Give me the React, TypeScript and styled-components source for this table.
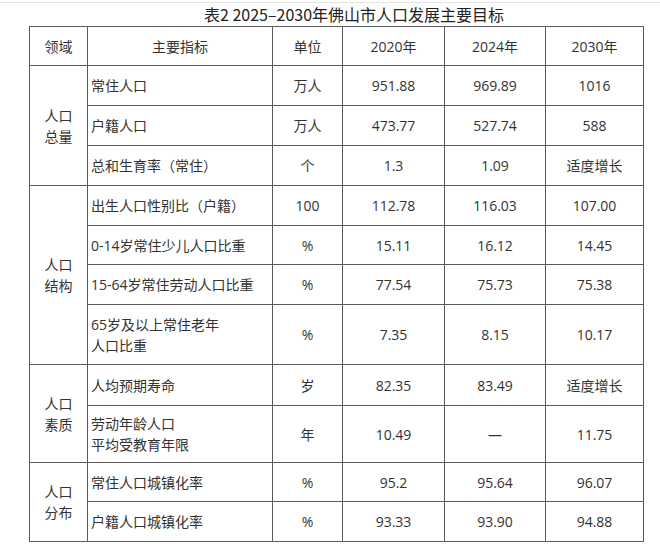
import React from 'react'
import styled, { createGlobalStyle } from 'styled-components'

const GlobalStyle = createGlobalStyle`
    html, body {
        margin: 0;
        padding: 0;
        background: #ffffff;
    }
    body {
        font-family: "Open Sans", "Noto Sans CJK SC", sans-serif;
        color: #333333;
    }
`

const Page = styled.div`
    width: 660px;
    height: 552px;
    overflow: hidden;
    border-top: 1px solid #e4e4e4;
    margin-top: 2px;
    box-sizing: border-box;
`

const Title = styled.div`
    height: 23px;
    padding-left: 204px;
    font-family: "Noto Sans CJK SC", sans-serif;
    font-size: 16px;
    line-height: 23px;
    color: #222222;
    white-space: nowrap;
`

const Table = styled.table`
    margin-left: 29px;
    width: 614px;
    table-layout: fixed;
    border-collapse: collapse;
    font-size: 14px;
`

const Row = styled.tr<{ $h: number }>`
    height: ${p => p.$h}px;
`

const Cell = styled.td<{ $left?: boolean }>`
    border: 1px solid #5a5a5a;
    padding: 0;
    padding-left: ${p => (p.$left ? '3px' : '0')};
    text-align: ${p => (p.$left ? 'left' : 'center')};
    vertical-align: middle;
    line-height: 21px;
    color: #333333;
`

const HeadCell = styled(Cell).attrs({ as: 'th' })`
    font-weight: normal;
`

const Group = styled(Cell)`
    line-height: 21px;
`

type Item = {
    name: React.ReactNode
    unit: string
    y2020: string
    y2024: string
    y2030: string
    h: number
}

type Section = {
    area: string[]
    items: Item[]
}

const sections: Section[] = [
    {
        area: ['人口', '总量'],
        items: [
            { name: '常住人口', unit: '万人', y2020: '951.88', y2024: '969.89', y2030: '1016', h: 40 },
            { name: '户籍人口', unit: '万人', y2020: '473.77', y2024: '527.74', y2030: '588', h: 40 },
            { name: '总和生育率（常住）', unit: '个', y2020: '1.3', y2024: '1.09', y2030: '适度增长', h: 40 },
        ],
    },
    {
        area: ['人口', '结构'],
        items: [
            { name: '出生人口性别比（户籍）', unit: '100', y2020: '112.78', y2024: '116.03', y2030: '107.00', h: 40 },
            { name: '0-14岁常住少儿人口比重', unit: '%', y2020: '15.11', y2024: '16.12', y2030: '14.45', h: 39 },
            { name: '15-64岁常住劳动人口比重', unit: '%', y2020: '77.54', y2024: '75.73', y2030: '75.38', h: 40 },
            { name: <>65岁及以上常住老年<br />人口比重</>, unit: '%', y2020: '7.35', y2024: '8.15', y2030: '10.17', h: 60 },
        ],
    },
    {
        area: ['人口', '素质'],
        items: [
            { name: '人均预期寿命', unit: '岁', y2020: '82.35', y2024: '83.49', y2030: '适度增长', h: 41 },
            { name: <>劳动年龄人口<br />平均受教育年限</>, unit: '年', y2020: '10.49', y2024: '—', y2030: '11.75', h: 57 },
        ],
    },
    {
        area: ['人口', '分布'],
        items: [
            { name: '常住人口城镇化率', unit: '%', y2020: '95.2', y2024: '95.64', y2030: '96.07', h: 39 },
            { name: '户籍人口城镇化率', unit: '%', y2020: '93.33', y2024: '93.90', y2030: '94.88', h: 40 },
        ],
    },
]

export default function App() {
    return (
        <>
            <GlobalStyle />
            <Page>
                <Title>表2 2025–2030年佛山市人口发展主要目标</Title>
                <Table>
                    <colgroup>
                        <col style={{ width: 58 }} />
                        <col style={{ width: 185 }} />
                        <col style={{ width: 70 }} />
                        <col style={{ width: 102 }} />
                        <col style={{ width: 101 }} />
                        <col style={{ width: 98 }} />
                    </colgroup>
                    <thead>
                        <Row $h={39}>
                            <HeadCell>领域</HeadCell>
                            <HeadCell>主要指标</HeadCell>
                            <HeadCell>单位</HeadCell>
                            <HeadCell>2020年</HeadCell>
                            <HeadCell>2024年</HeadCell>
                            <HeadCell>2030年</HeadCell>
                        </Row>
                    </thead>
                    <tbody>
                        {sections.map(sec =>
                            sec.items.map((it, i) => (
                                <Row $h={it.h} key={sec.area[1] + i}>
                                    {i === 0 && (
                                        <Group rowSpan={sec.items.length}>
                                            {sec.area[0]}
                                            <br />
                                            {sec.area[1]}
                                        </Group>
                                    )}
                                    <Cell $left>{it.name}</Cell>
                                    <Cell>{it.unit}</Cell>
                                    <Cell>{it.y2020}</Cell>
                                    <Cell>{it.y2024}</Cell>
                                    <Cell>{it.y2030}</Cell>
                                </Row>
                            ))
                        )}
                    </tbody>
                </Table>
            </Page>
        </>
    )
}
